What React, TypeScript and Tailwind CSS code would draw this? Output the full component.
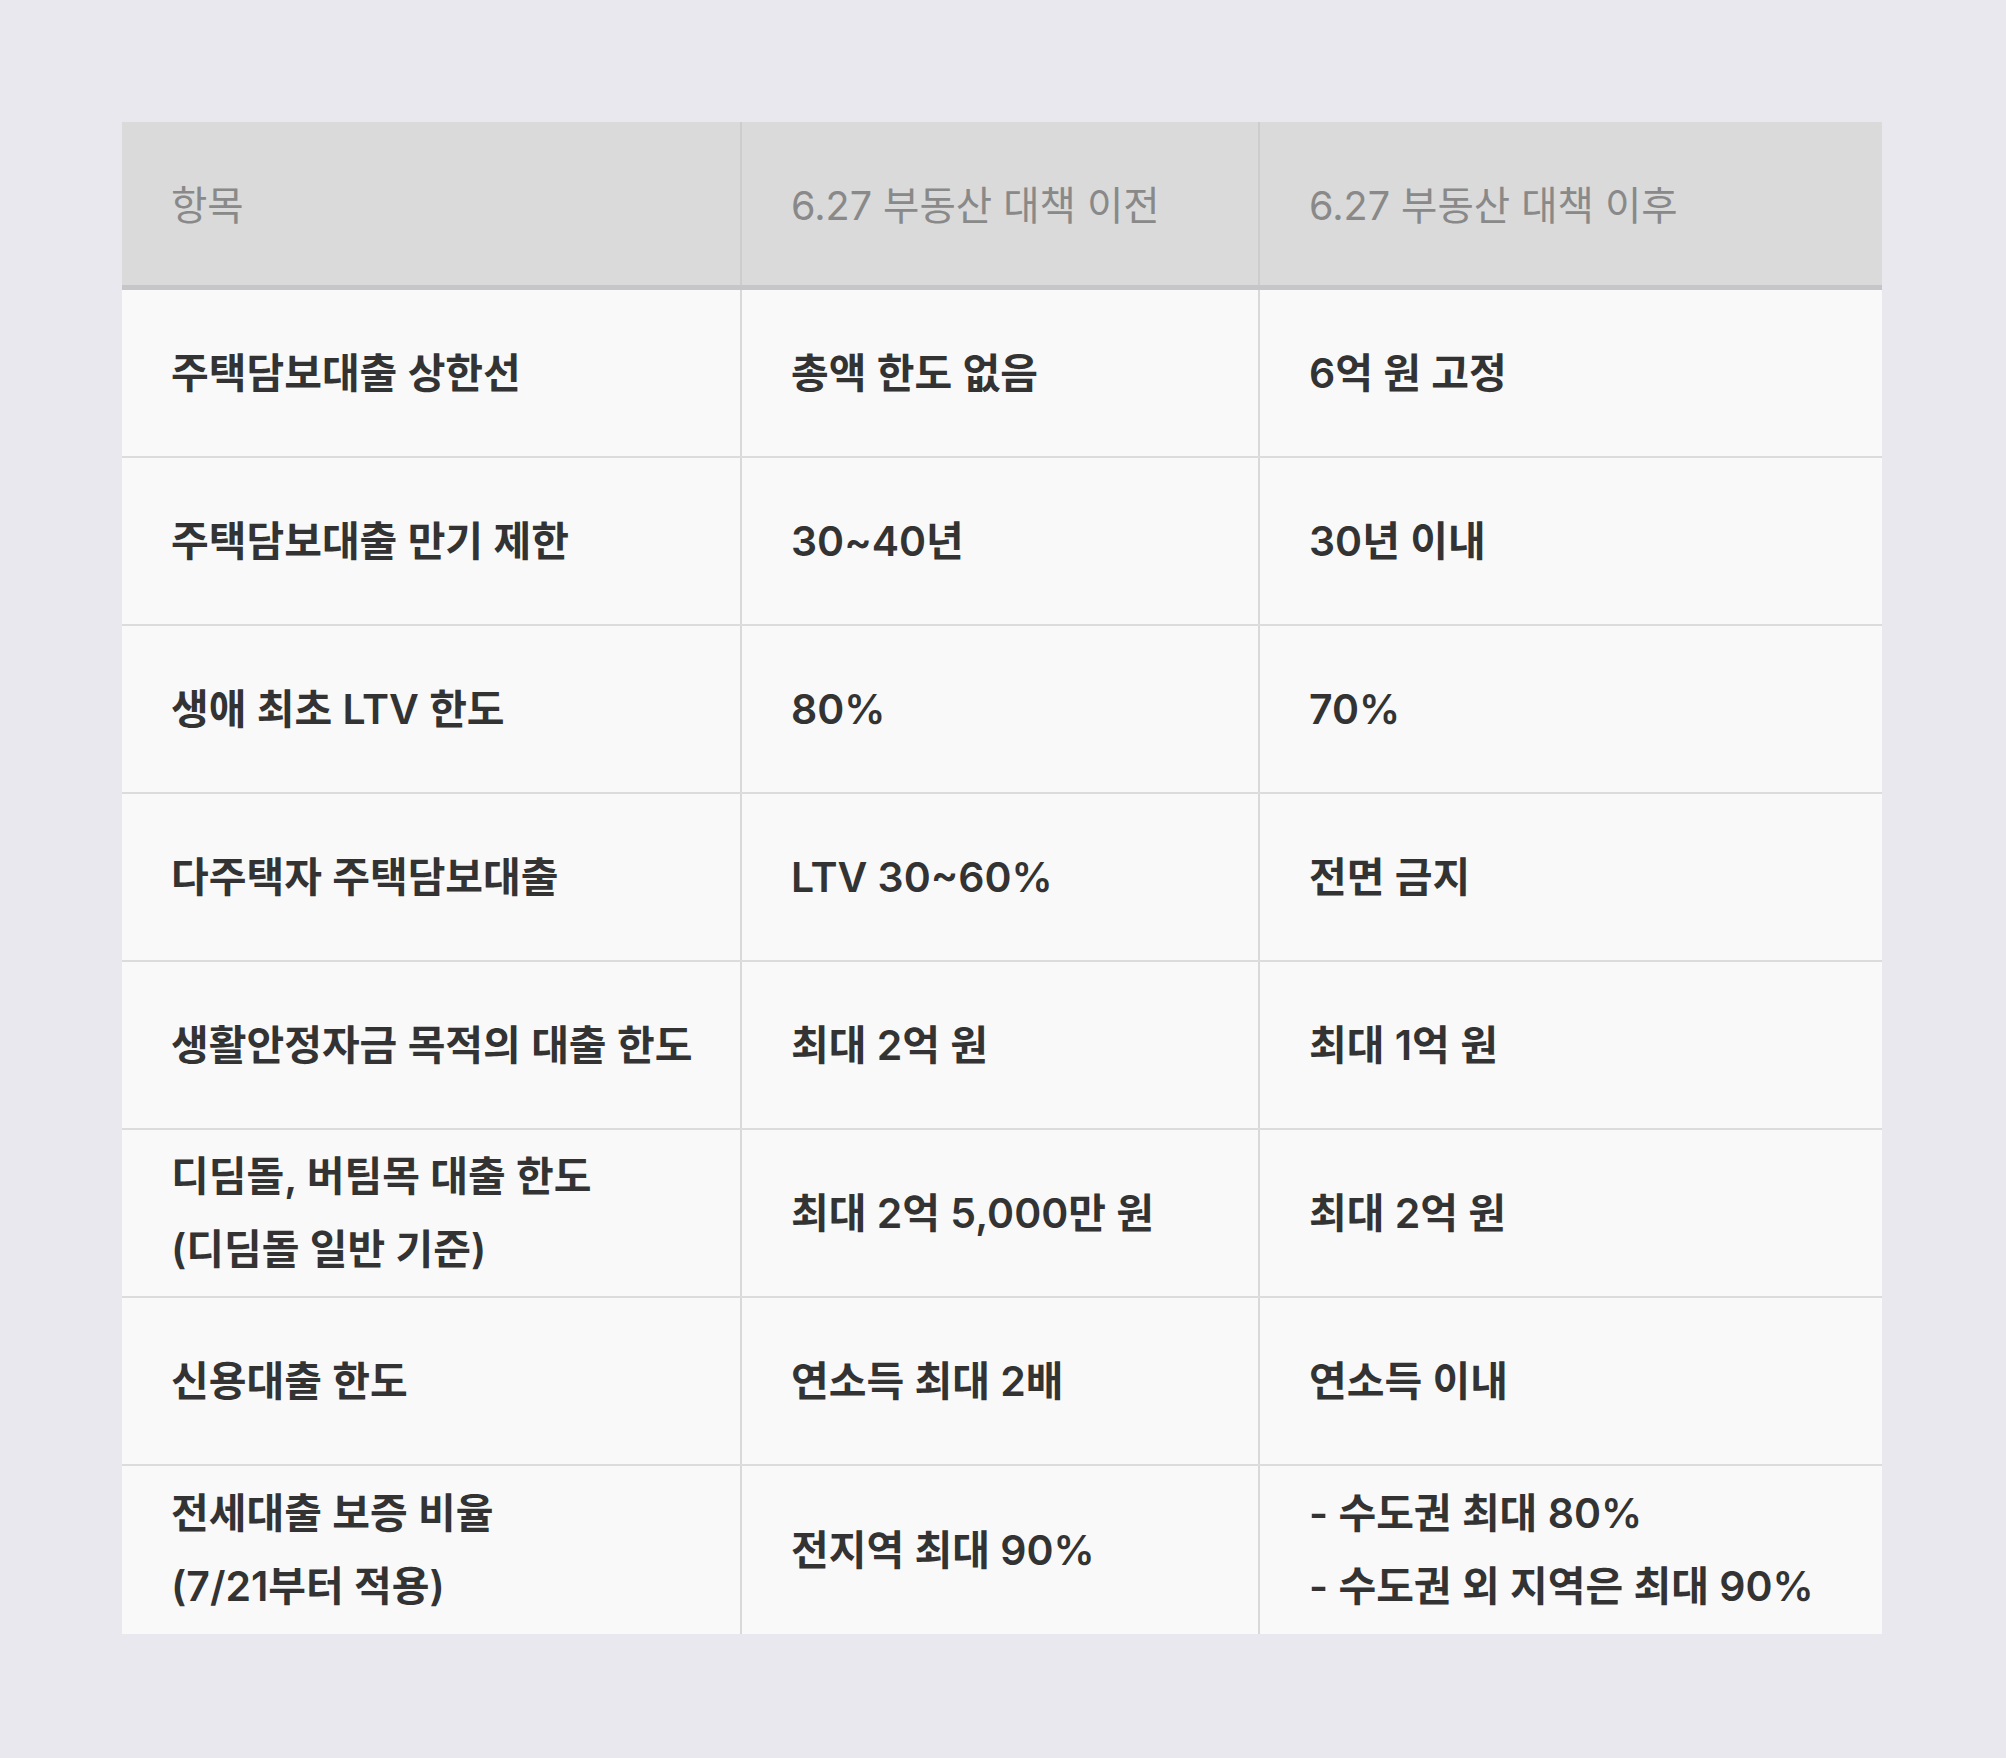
const headers = ['항목', '6.27 부동산 대책 이전', '6.27 부동산 대책 이후'];

const rows: string[][][] = [
  [['주택담보대출 상한선'], ['총액 한도 없음'], ['6억 원 고정']],
  [['주택담보대출 만기 제한'], ['30~40년'], ['30년 이내']],
  [['생애 최초 LTV 한도'], ['80%'], ['70%']],
  [['다주택자 주택담보대출'], ['LTV 30~60%'], ['전면 금지']],
  [['생활안정자금 목적의 대출 한도'], ['최대 2억 원'], ['최대 1억 원']],
  [['디딤돌, 버팀목 대출 한도', '(디딤돌 일반 기준)'], ['최대 2억 5,000만 원'], ['최대 2억 원']],
  [['신용대출 한도'], ['연소득 최대 2배'], ['연소득 이내']],
  [['전세대출 보증 비율', '(7/21부터 적용)'], ['전지역 최대 90%'], ['- 수도권 최대 80%', '- 수도권 외 지역은 최대 90%']],
];

export default function App() {
  return (
    <div
      className="w-[2006px] h-[1758px] bg-[#e8e8ee] pt-[122px] pl-[122px]"
      style={{ fontFamily: 'Inter, "Noto Sans CJK KR", sans-serif' }}
    >
      <div className="w-[1760px]">
        <div className="grid grid-cols-[620px_518px_622px] h-[168px] bg-[#dadada] border-b-[5px] border-[#c5c5ca]">
          {headers.map((h, i) => (
            <div
              key={i}
              className={`flex items-center pl-[49px] pt-[6px] text-[39.5px] font-normal text-[#898989] ${
                i < 2 ? 'border-r-2 border-[#cdcdcd]' : ''
              }`}
            >
              {h}
            </div>
          ))}
        </div>

        {rows.map((row, r) => (
          <div
            key={r}
            className={`grid grid-cols-[620px_518px_622px] h-[168px] bg-[#f9f9f9] ${
              r < rows.length - 1 ? 'border-b-2 border-[#dcdcdc]' : ''
            }`}
          >
            {row.map((cell, c) => (
              <div
                key={c}
                className={`flex flex-col justify-center pl-[49px] text-[41px] font-semibold text-[#333333] leading-[73px] ${
                  c < 2 ? 'border-r-2 border-[#d9d9d9]' : ''
                }`}
              >
                {cell.map((line, l) => (
                  <div key={l}>{line}</div>
                ))}
              </div>
            ))}
          </div>
        ))}
      </div>
    </div>
  );
}
